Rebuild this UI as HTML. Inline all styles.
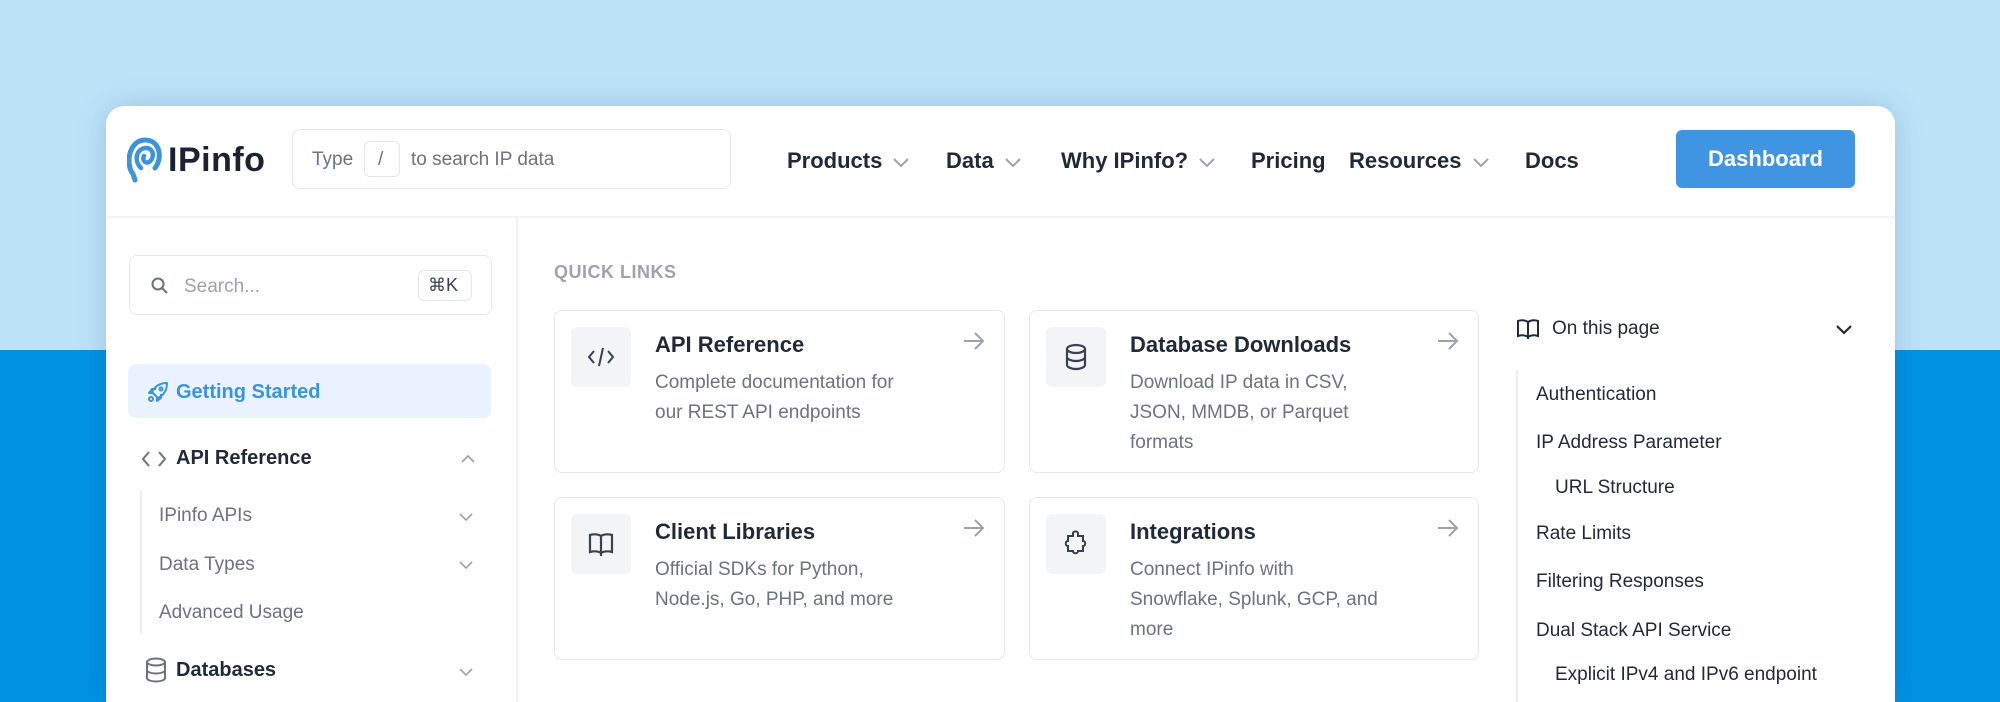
<!DOCTYPE html>
<html><head><meta charset="utf-8"><style>
*{box-sizing:border-box;margin:0;padding:0}
html{width:2000px;height:702px;overflow:hidden}
body{width:2000px;height:702px;overflow:hidden;position:relative;font-family:"Liberation Sans",sans-serif;background:#0093e2}
.top{position:absolute;left:0;top:0;width:2000px;height:350px;background:#bce3f8}
.card{position:absolute;left:106px;top:106px;width:1789px;height:596px;background:#fff;border-radius:18px 18px 0 0;box-shadow:0 0 30px rgba(0,60,110,.18);overflow:hidden}
.a{position:absolute;white-space:nowrap}
.hdr{position:absolute;left:0;top:0;width:100%;height:112px;border-bottom:2px solid #f3f4f6}
.nav{font-size:22px;font-weight:bold;color:#1f2937;top:42px}
.chev{display:inline-block;vertical-align:middle;margin-left:10px}
.box{position:absolute;border:1.5px solid #e5e7eb;border-radius:8px;background:#fff}
.qc .t{font-size:22px;font-weight:bold;color:#1f2937;left:100px;top:21px}
.qc .d{font-size:19px;color:#6b7280;left:100px;top:57px;line-height:30px;white-space:normal;width:255px}
.ib{position:absolute;left:16px;top:16px;width:60px;height:60px;border-radius:6px;background:#f3f4f6;display:flex;align-items:center;justify-content:center}
.arr{position:absolute;right:18px;top:20px}
.toc{font-size:19px;color:#1f2937}
.sub{font-size:19px;color:#6b7280}
</style></head><body>
<div class="top"></div>
<div class="card">
 <div class="hdr">
  <svg class="a" style="left:21px;top:30px" width="36" height="48" viewBox="0 0 36 48"><path d="M8 44 L6 38 C-2 28 2 4 18 4 C33 4 36 22 28 32" fill="none" stroke="#3b93e0" stroke-width="5" stroke-linecap="round"/><path d="M14 32 C6 24 10 12 19 12 C27 12 28 22 22 26 C18 28 15 24 17 20" fill="none" stroke="#3b93e0" stroke-width="4.5" stroke-linecap="round"/></svg>
  <div class="a" style="left:62px;top:35px;font-size:34px;font-weight:bold;color:#1a2233;letter-spacing:0.5px">IPinfo</div>
  <div class="box" style="left:186px;top:23px;width:439px;height:60px;border-radius:8px"></div>
  <div class="a" style="left:206px;top:43px;font-size:19px;color:#6b7280">Type</div>
  <div class="box" style="left:258px;top:35px;width:36px;height:36px;border-radius:6px"></div>
  <div class="a" style="left:272px;top:43px;font-size:19px;color:#6b7280">/</div>
  <div class="a" style="left:305px;top:43px;font-size:19px;color:#6b7280">to search IP data</div>
  <div class="a nav" style="left:681px">Products<svg class="chev" width="18" height="12" viewBox="0 0 18 12"><path d="M2 3l7 7 7-7" fill="none" stroke="#9ca3af" stroke-width="2"/></svg></div>
  <div class="a nav" style="left:840px">Data<svg class="chev" width="18" height="12" viewBox="0 0 18 12"><path d="M2 3l7 7 7-7" fill="none" stroke="#9ca3af" stroke-width="2"/></svg></div>
  <div class="a nav" style="left:955px">Why IPinfo?<svg class="chev" width="18" height="12" viewBox="0 0 18 12"><path d="M2 3l7 7 7-7" fill="none" stroke="#9ca3af" stroke-width="2"/></svg></div>
  <div class="a nav" style="left:1145px">Pricing</div>
  <div class="a nav" style="left:1243px">Resources<svg class="chev" width="18" height="12" viewBox="0 0 18 12"><path d="M2 3l7 7 7-7" fill="none" stroke="#9ca3af" stroke-width="2"/></svg></div>
  <div class="a nav" style="left:1419px">Docs</div>
  <div class="a" style="left:1570px;top:24px;width:179px;height:58px;background:#3f95e1;border-radius:6px;color:#fff;font-size:22px;font-weight:bold;text-align:center;line-height:58px">Dashboard</div>
 </div>
 <div class="a" style="left:410px;top:112px;width:2px;height:484px;background:#f1f2f4"></div>
 <div class="box" style="left:23px;top:149px;width:363px;height:60px"></div>
 <svg class="a" style="left:44px;top:170px" width="20" height="20" viewBox="0 0 20 20"><circle cx="8" cy="8" r="5.5" fill="none" stroke="#6b7280" stroke-width="2"/><path d="M12 12l5 5" stroke="#6b7280" stroke-width="2"/></svg>
 <div class="a" style="left:78px;top:170px;font-size:19px;color:#9ca3af">Search...</div>
 <div class="box" style="left:312px;top:164px;width:54px;height:31px;border-radius:6px"></div>
 <div class="a" style="left:322px;top:169px;font-size:18px;color:#374151">⌘K</div>
 <div class="a" style="left:22px;top:258px;width:363px;height:54px;background:#eaf3fd;border-radius:8px"></div>
 <svg class="a" style="left:40px;top:274px" width="24" height="24" viewBox="0 0 24 24" fill="none" stroke="#3b93e0" stroke-width="2" stroke-linejoin="round"><path d="M9 15l-3-3c3-6 8-9 15-9 0 7-3 12-9 15z"/><circle cx="15" cy="9" r="1.5"/><path d="M7 13l-4 0 3-4 4 0M11 17l0 4 4-3 0-4"/><circle cx="5" cy="19" r="2"/></svg>
 <div class="a" style="left:70px;top:275px;font-size:20px;color:#3b93e0;font-weight:bold">Getting Started</div>
 <svg class="a" style="left:35px;top:344px" width="26" height="18" viewBox="0 0 26 18" fill="none" stroke="#6b7280" stroke-width="2"><path d="M8 2L2 9l6 7M18 2l6 7-6 7"/></svg>
 <div class="a" style="left:70px;top:341px;font-size:20px;color:#1f2937;font-weight:bold">API Reference</div>
 <svg class="a" style="left:354px;top:348px" width="16" height="10" viewBox="0 0 16 10"><path d="M2 8l6-6 6 6" fill="none" stroke="#9ca3af" stroke-width="1.8"/></svg>
 <div class="a" style="left:34px;top:385px;width:2px;height:143px;background:#eceef1"></div>
 <div class="a sub" style="left:53px;top:399px">IPinfo APIs</div>
 <div class="a sub" style="left:53px;top:448px">Data Types</div>
 <div class="a sub" style="left:53px;top:496px">Advanced Usage</div>
 <svg class="a" style="left:352px;top:406px" width="16" height="10" viewBox="0 0 16 10"><path d="M2 2l6 6 6-6" fill="none" stroke="#9ca3af" stroke-width="1.6"/></svg>
 <svg class="a" style="left:352px;top:454px" width="16" height="10" viewBox="0 0 16 10"><path d="M2 2l6 6 6-6" fill="none" stroke="#9ca3af" stroke-width="1.6"/></svg>
 <svg class="a" style="left:38px;top:551px" width="24" height="26" viewBox="0 0 24 26" fill="none" stroke="#6b7280" stroke-width="2"><ellipse cx="12" cy="5" rx="9" ry="3.5"/><path d="M3 5v16c0 2 4 3.5 9 3.5s9-1.5 9-3.5V5M3 13c0 2 4 3.5 9 3.5s9-1.5 9-3.5"/></svg>
 <div class="a" style="left:70px;top:553px;font-size:20px;color:#1f2937;font-weight:bold">Databases</div>
 <svg class="a" style="left:352px;top:561px" width="16" height="10" viewBox="0 0 16 10"><path d="M2 2l6 6 6-6" fill="none" stroke="#9ca3af" stroke-width="1.6"/></svg>
 <div class="a" style="left:448px;top:156px;font-size:18px;font-weight:bold;color:#9ca3af;letter-spacing:.5px">QUICK LINKS</div>
 <div class="box qc" style="left:448px;top:204px;width:451px;height:163px">
  <div class="ib"><svg width="30" height="24" viewBox="0 0 30 24" fill="none" stroke="#374151" stroke-width="2"><path d="M8 6L3 12l5 6M22 6l5 6-5 6M17 3l-4 18"/></svg></div>
  <div class="a t">API Reference</div><div class="a d">Complete documentation for our REST API endpoints</div>
  <svg class="arr" width="24" height="20" viewBox="0 0 24 20" fill="none" stroke="#9ca3af" stroke-width="2"><path d="M2 10h19M13 2l8 8-8 8"/></svg>
 </div>
 <div class="box qc" style="left:923px;top:204px;width:450px;height:163px">
  <div class="ib"><svg width="24" height="28" viewBox="0 0 24 28" fill="none" stroke="#374151" stroke-width="2.2"><ellipse cx="12" cy="6" rx="9" ry="4"/><path d="M3 6v16c0 2 4 4 9 4s9-2 9-4V6M3 14c0 2 4 4 9 4s9-2 9-4"/></svg></div>
  <div class="a t">Database Downloads</div><div class="a d">Download IP data in CSV, JSON, MMDB, or Parquet formats</div>
  <svg class="arr" width="24" height="20" viewBox="0 0 24 20" fill="none" stroke="#9ca3af" stroke-width="2"><path d="M2 10h19M13 2l8 8-8 8"/></svg>
 </div>
 <div class="box qc" style="left:448px;top:391px;width:451px;height:163px">
  <div class="ib"><svg width="28" height="28" viewBox="0 0 28 28" fill="none" stroke="#374151" stroke-width="2.2"><path d="M14 6c-3-2-7-2-11-1v17c4-1 8-1 11 1 3-2 7-2 11-1V5c-4-1-8-1-11 1zM14 6v20"/></svg></div>
  <div class="a t">Client Libraries</div><div class="a d">Official SDKs for Python, Node.js, Go, PHP, and more</div>
  <svg class="arr" width="24" height="20" viewBox="0 0 24 20" fill="none" stroke="#9ca3af" stroke-width="2"><path d="M2 10h19M13 2l8 8-8 8"/></svg>
 </div>
 <div class="box qc" style="left:923px;top:391px;width:450px;height:163px">
  <div class="ib"><svg width="28" height="30" viewBox="0 0 28 30" fill="none" stroke="#374151" stroke-width="2"><path d="M11 4c0-2 5-2 5 0v3h5v5c3 0 3 5 0 5v5h-5c0 3-5 3-5 0H6v-5c-3 0-3-5 0-5V7h5z"/></svg></div>
  <div class="a t">Integrations</div><div class="a d">Connect IPinfo with Snowflake, Splunk, GCP, and more</div>
  <svg class="arr" width="24" height="20" viewBox="0 0 24 20" fill="none" stroke="#9ca3af" stroke-width="2"><path d="M2 10h19M13 2l8 8-8 8"/></svg>
 </div>
 <svg class="a" style="left:1410px;top:212px" width="24" height="22" viewBox="0 0 24 22" fill="none" stroke="#1f2937" stroke-width="2"><path d="M12 4C9 2 5 2 2 3v15c3-1 7-1 10 1 3-2 7-2 10-1V3c-3-1-7-1-10 1zM12 4v17"/></svg>
 <div class="a toc" style="left:1446px;top:212px">On this page</div>
 <svg class="a" style="left:1729px;top:218px" width="18" height="12" viewBox="0 0 18 12"><path d="M2 2l7 7 7-7" fill="none" stroke="#1f2937" stroke-width="2.2"/></svg>
 <div class="a" style="left:1410px;top:264px;width:2px;height:332px;background:#eceef1"></div>
 <div class="a toc" style="left:1430px;top:278px">Authentication</div>
 <div class="a toc" style="left:1430px;top:326px">IP Address Parameter</div>
 <div class="a toc" style="left:1449px;top:371px">URL Structure</div>
 <div class="a toc" style="left:1430px;top:417px">Rate Limits</div>
 <div class="a toc" style="left:1430px;top:465px">Filtering Responses</div>
 <div class="a toc" style="left:1430px;top:514px">Dual Stack API Service</div>
 <div class="a toc" style="left:1449px;top:558px">Explicit IPv4 and IPv6 endpoint</div>
</div>
</body></html>
